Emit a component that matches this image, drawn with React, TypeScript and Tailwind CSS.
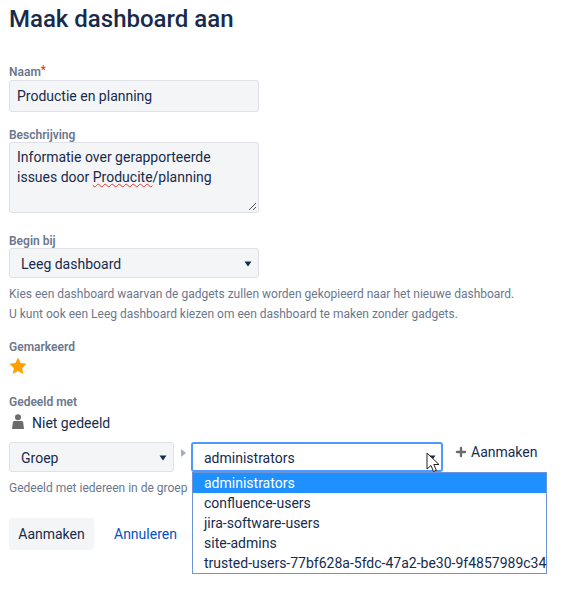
import { Plus } from 'lucide-react'

const groups = ['administrators', 'confluence-users', 'jira-software-users', 'site-admins', 'trusted-users-77bf628a-5fdc-47a2-be30-9f4857989c34']

function Caret() {
  return (
    <svg width="8" height="6" viewBox="0 0 8 6" className="shrink-0">
      <path d="M0.5 0.5h7L4 5.5z" fill="#172b4d" />
    </svg>
  )
}

function Label({ children }: { children: React.ReactNode }) {
  return <div className="text-xs font-semibold leading-4 text-[#6b778c]">{children}</div>
}

export default function App() {
  return (
    <div className="h-[590px] w-[576px] overflow-hidden bg-white pl-[9px] font-['Roboto',sans-serif] text-sm text-[#172b4d]">
      <h1 className="pt-[3px] text-2xl leading-8 font-medium">Maak dashboard aan</h1>

      <div className="mt-[30px] flex h-[15px] items-end">
        <Label>Naam</Label>
        <span className="mb-[4px] text-xs leading-3 text-[#de350b]">*</span>
      </div>
      <div className="flex h-8 w-[250px] items-center rounded-[3px] border border-[#dfe1e6] bg-[#f4f5f7] pl-[7px]">Productie en planning</div>

      <div className="mt-[15px] mb-[-1px]">
        <Label>Beschrijving</Label>
      </div>
      <div className="relative h-[71px] w-[250px] rounded-[3px] border border-[#dfe1e6] bg-[#f4f5f7] pt-[4px] pl-[7px] leading-5">
        <div>Informatie over gerapporteerde</div>
        <div>
          issues door <span className="underline decoration-[#e53935] decoration-wavy decoration-1">Producite</span>/planning
        </div>
        <svg width="9" height="9" viewBox="0 0 9 9" className="absolute right-[1px] bottom-[1px]">
          <path d="M1 8L8 1M5 8L8 5" stroke="#555" strokeWidth="1" />
        </svg>
      </div>

      <div className="mt-[20px] mb-[-1px]">
        <Label>Begin bij</Label>
      </div>
      <div className="flex h-[30px] w-[250px] items-center justify-between rounded-[3px] border border-[#dfe1e6] bg-[#f4f5f7] pt-[1px] pr-[6px] pl-[11px]">
        <span>Leeg dashboard</span>
        <Caret />
      </div>
      <div className="mt-[6px] text-xs leading-5 text-[#6b778c]">
        <div>Kies een dashboard waarvan de gadgets zullen worden gekopieerd naar het nieuwe dashboard.</div>
        <div>U kunt ook een Leeg dashboard kiezen om een dashboard te maken zonder gadgets.</div>
      </div>

      <div className="mt-[15px]">
        <Label>Gemarkeerd</Label>
      </div>
      <svg width="16" height="16" viewBox="0 0 16 16" className="mt-[2px] h-[18px] w-[18px]">
        <path d="M8 0.500l2.300 4.900 5.300.7-3.900 3.700 1 5.300L8 12.500l-4.700 2.600 1-5.300L.4 6.100l5.300-.7z" fill="#ff9f00" />
      </svg>

      <div className="mt-[19px]">
        <Label>Gedeeld met</Label>
      </div>
      <div className="mt-[3px] flex h-[20px] items-center">
        <svg width="12" height="16" viewBox="0 0 12 16" className="mb-[2px] ml-[3px]">
          <circle cx="6" cy="3.200" r="3" fill="#6b6b6b" />
          <path d="M2.500 7h7c1 0 1.500.7 1.700 1.600L12 15H0l.8-6.400C1 7.700 1.500 7 2.500 7z" fill="#6b6b6b" />
        </svg>
        <span className="ml-[8px]">Niet gedeeld</span>
      </div>

      <div className="mt-[9px] flex items-start">
        <div className="flex h-[30px] w-[165px] items-center justify-between rounded-[3px] border border-[#dfe1e6] bg-[#f4f5f7] pt-[1px] pr-[6px] pl-[11px]">
          <span>Groep</span>
          <Caret />
        </div>
        <svg width="5" height="8" viewBox="0 0 5 8" className="mt-[7px] ml-[7px]">
          <path d="M0 0l5 4-5 4z" fill="#a5adba" />
        </svg>
        <div className="relative ml-[5px]">
          <div className="flex h-[30px] w-[252px] items-center justify-between rounded-[3px] border-2 border-[#4c9aff] bg-white pt-[1px] pr-[5px] pl-[11px]">
            <span>administrators</span>
            <Caret />
          </div>
          <svg width="16" height="23" viewBox="0 0 16 23" className="absolute top-[10px] left-[235px]">
            <path d="M1 1v16l4-3.500 2.500 6 2.800-1.200-2.500-5.800h5.200z" fill="#fff" stroke="#222" strokeWidth="1" />
          </svg>
          <div className="absolute top-[30px] left-[1px] w-[355px] border border-[#6d93d6] bg-white leading-5">
            {groups.map((g, i) => (
              <div key={g} className={i === 0 ? 'bg-[#1e90ff] pl-[11px] whitespace-nowrap text-white' : 'pl-[11px] whitespace-nowrap'}>
                {g}
              </div>
            ))}
          </div>
        </div>
        <div className="ml-[11px] flex items-center">
          <Plus size={14} strokeWidth={4} className="text-[#6b6b6b]" />
          <span className="ml-[3px]">Aanmaken</span>
        </div>
      </div>
      <div className="mt-[6px] text-xs leading-5 text-[#6b778c]">Gedeeld met iedereen in de groep</div>

      <div className="mt-[20px] flex items-center">
        <div className="flex h-8 w-[85px] items-center justify-center rounded-[3px] bg-[#f4f5f7]">Aanmaken</div>
        <a className="ml-[20px] text-[#0052cc]">Annuleren</a>
      </div>
    </div>
  )
}
